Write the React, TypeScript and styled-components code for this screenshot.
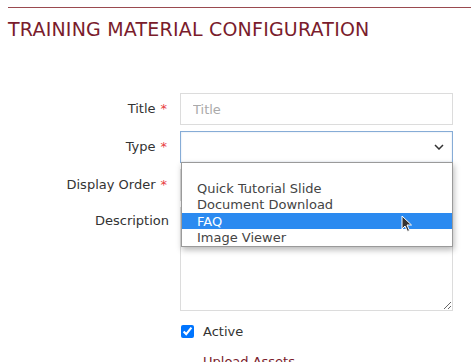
import React from 'react'
import styled, { createGlobalStyle } from 'styled-components'

const GlobalStyle = createGlobalStyle`
  body {
    margin: 0;
    background: #fff;
    font-family: 'DejaVu Sans', Verdana, sans-serif;
    color: #333;
    overflow: hidden;
  }
`

const Page = styled.div`
  padding-top: 7px;
`

const Rule = styled.div`
  height: 1px;
  margin-left: 8px;
  background: #9a4a4f;
`

const Heading = styled.h1`
  margin: 9px 0 0 8px;
  font-size: 19px;
  line-height: 24px;
  font-weight: normal;
  color: #7a1c2c;
  letter-spacing: 0.2px;
`

const Form = styled.div`
  display: grid;
  grid-template-columns: 167px 273px;
  column-gap: 13px;
  row-gap: 6px;
  margin-top: 52px;
`

const Label = styled.label<{ $top?: boolean }>`
  align-self: ${(p) => (p.$top ? 'start' : 'center')};
  padding-top: ${(p) => (p.$top ? '6px' : '0')};
  margin-right: ${(p) => (p.$top ? '-2px' : '0')};
  text-align: right;
  font-size: 13px;
  line-height: 16px;
  color: #333;
`

const Req = styled.span`
  color: #e8403f;
  margin-left: 5px;
`

const TextInput = styled.input`
  box-sizing: border-box;
  height: 32px;
  width: 100%;
  border: 1px solid #dcdcdc;
  padding: 0 12px;
  font-family: inherit;
  font-size: 13px;
  color: #333;
  outline: none;

  &::placeholder {
    color: #aaa;
  }
`

const SelectWrap = styled.div`
  position: relative;
`

const SelectBox = styled.div`
  box-sizing: border-box;
  height: 32px;
  border: 1px solid #86acd6;
  box-shadow: inset 0 0 2px rgba(120, 160, 210, 0.35);
  display: flex;
  align-items: center;
  justify-content: flex-end;
  padding-right: 8px;
`

const Menu = styled.ul`
  position: absolute;
  z-index: 2;
  left: 1px;
  top: 31px;
  width: 272px;
  box-sizing: border-box;
  margin: 0;
  padding: 0;
  list-style: none;
  background: #fff;
  border: 1px solid #9a9a9a;
  box-shadow: 1px 3px 6px rgba(0, 0, 0, 0.28);
`

const Option = styled.li<{ $active?: boolean }>`
  height: 16.6px;
  line-height: 17px;
  padding-left: 15px;
  font-size: 13px;
  color: ${(p) => (p.$active ? '#fff' : '#444')};
  background: ${(p) => (p.$active ? '#2b8af0' : 'transparent')};
  position: relative;
`

const Pointer = styled.svg`
  position: absolute;
  left: 219px;
  top: 2px;
`

const TextArea = styled.textarea`
  box-sizing: border-box;
  height: 104px;
  width: 100%;
  border: 1px solid #dcdcdc;
  font-family: inherit;
  font-size: 13px;
  outline: none;
`

const CheckRow = styled.div`
  grid-column: 2;
  display: flex;
  align-items: center;
  gap: 9px;
  margin-top: 7px;
  font-size: 13px;
  color: #333;
`

const Check = styled.input`
  margin: 0 0 0 1px;
  width: 13px;
  height: 13px;
  accent-color: #0075ff;
`

const UploadLink = styled.a`
  grid-column: 2;
  margin: 9px 0 0 23px;
  font-size: 13px;
  color: #7a1c2c;
  text-decoration: none;
`

const types = ['', 'Quick Tutorial Slide', 'Document Download', 'FAQ', 'Image Viewer']

export default function App() {
  return (
    <Page>
      <GlobalStyle />
      <Rule />
      <Heading>TRAINING MATERIAL CONFIGURATION</Heading>
      <Form>
        <Label>
          Title<Req>*</Req>
        </Label>
        <TextInput placeholder="Title" />

        <Label>
          Type<Req>*</Req>
        </Label>
        <SelectWrap>
          <SelectBox>
            <svg width="10" height="6" viewBox="0 0 10 6">
              <polyline points="1,1 5,5 9,1" fill="none" stroke="#333" strokeWidth="1.5" />
            </svg>
          </SelectBox>
          <Menu>
            {types.map((t) => (
              <Option key={t || 'blank'} $active={t === 'FAQ'}>
                {t || '\u00a0'}
                {t === 'FAQ' && (
                  <Pointer width="12" height="18" viewBox="0 0 12 18">
                    <path
                      d="M1 1 L1 14 L4 11 L6.5 16.5 L8.5 15.5 L6 10 L10.5 10 Z"
                      fill="#333"
                      stroke="#fff"
                      strokeWidth="1"
                      strokeLinejoin="round"
                    />
                  </Pointer>
                )}
              </Option>
            ))}
          </Menu>
        </SelectWrap>

        <Label>
          Display Order<Req>*</Req>
        </Label>
        <TextInput />

        <Label $top>Description</Label>
        <TextArea />

        <CheckRow>
          <Check type="checkbox" defaultChecked />
          Active
        </CheckRow>
        <UploadLink href="#">Upload Assets</UploadLink>
      </Form>
    </Page>
  )
}
